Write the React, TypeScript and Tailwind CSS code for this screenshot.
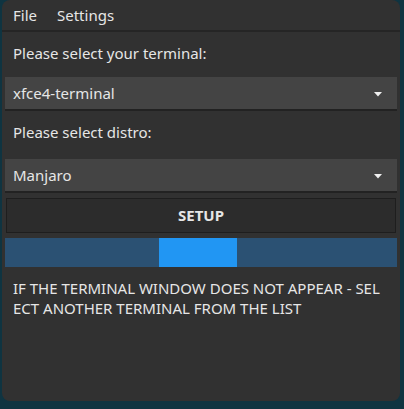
import { useState } from "react";

const terminals = ["xfce4-terminal", "konsole", "gnome-terminal", "xterm"];
const distros = ["Manjaro", "Arch Linux", "Ubuntu", "Debian"];

function Combo({ value }: { value: string }) {
  return (
    <div className="mx-[3px] flex h-[34px] items-center justify-between border-b-2 border-[#222222] bg-[#444444] pl-[8px] pr-[15px]">
      <span>{value}</span>
      {/* dropdown arrow */}
      <svg width="8" height="5" viewBox="0 0 8 5" className="mt-[3px]">
        <path d="M0 0h8L4 4.5z" fill="#f0f0f0" />
      </svg>
    </div>
  );
}

export default function App() {
  const [terminal] = useState(terminals[0]);
  const [distro] = useState(distros[0]);

  return (
    <div className="h-[409px] w-[404px] bg-[#0f3441] pl-[2px] pr-[4px] pb-[8px] font-['Noto_Sans',sans-serif] text-[15px] text-[#e6e6e6]">
      <div className="flex h-full flex-col rounded-[8px] bg-[#313131]">
        {/* Menu bar */}
        <div className="flex h-[32px] items-center gap-[20px] border-b-2 border-[#252525] px-[11px]">
          <span>File</span>
          <span>Settings</span>
        </div>

        <div className="px-[11px] pt-[10px] pb-[13px] leading-[22px]">Please select your terminal:</div>
        <Combo value={terminal} />

        <div className="px-[11px] pt-[10px] pb-[16px] leading-[22px]">Please select distro:</div>
        <Combo value={distro} />

        <div className="mx-[4px] mt-[5px] flex h-[35px] items-center justify-center border border-[#1e1e1e] bg-[#2c2c2c] text-[15px] font-bold">
          SETUP
        </div>

        <div className="mx-[3px] mt-[5px] h-[29px] bg-[#2b5173] pl-[154px]">
          <div className="h-full w-[78px] bg-[#2196f3]" />
        </div>

        <div className="px-[11px] pt-[11px] text-[15px] leading-[20px]">
          IF THE TERMINAL WINDOW DOES NOT APPEAR - SEL
          <br />
          ECT ANOTHER TERMINAL FROM THE LIST
        </div>
      </div>
    </div>
  );
}
